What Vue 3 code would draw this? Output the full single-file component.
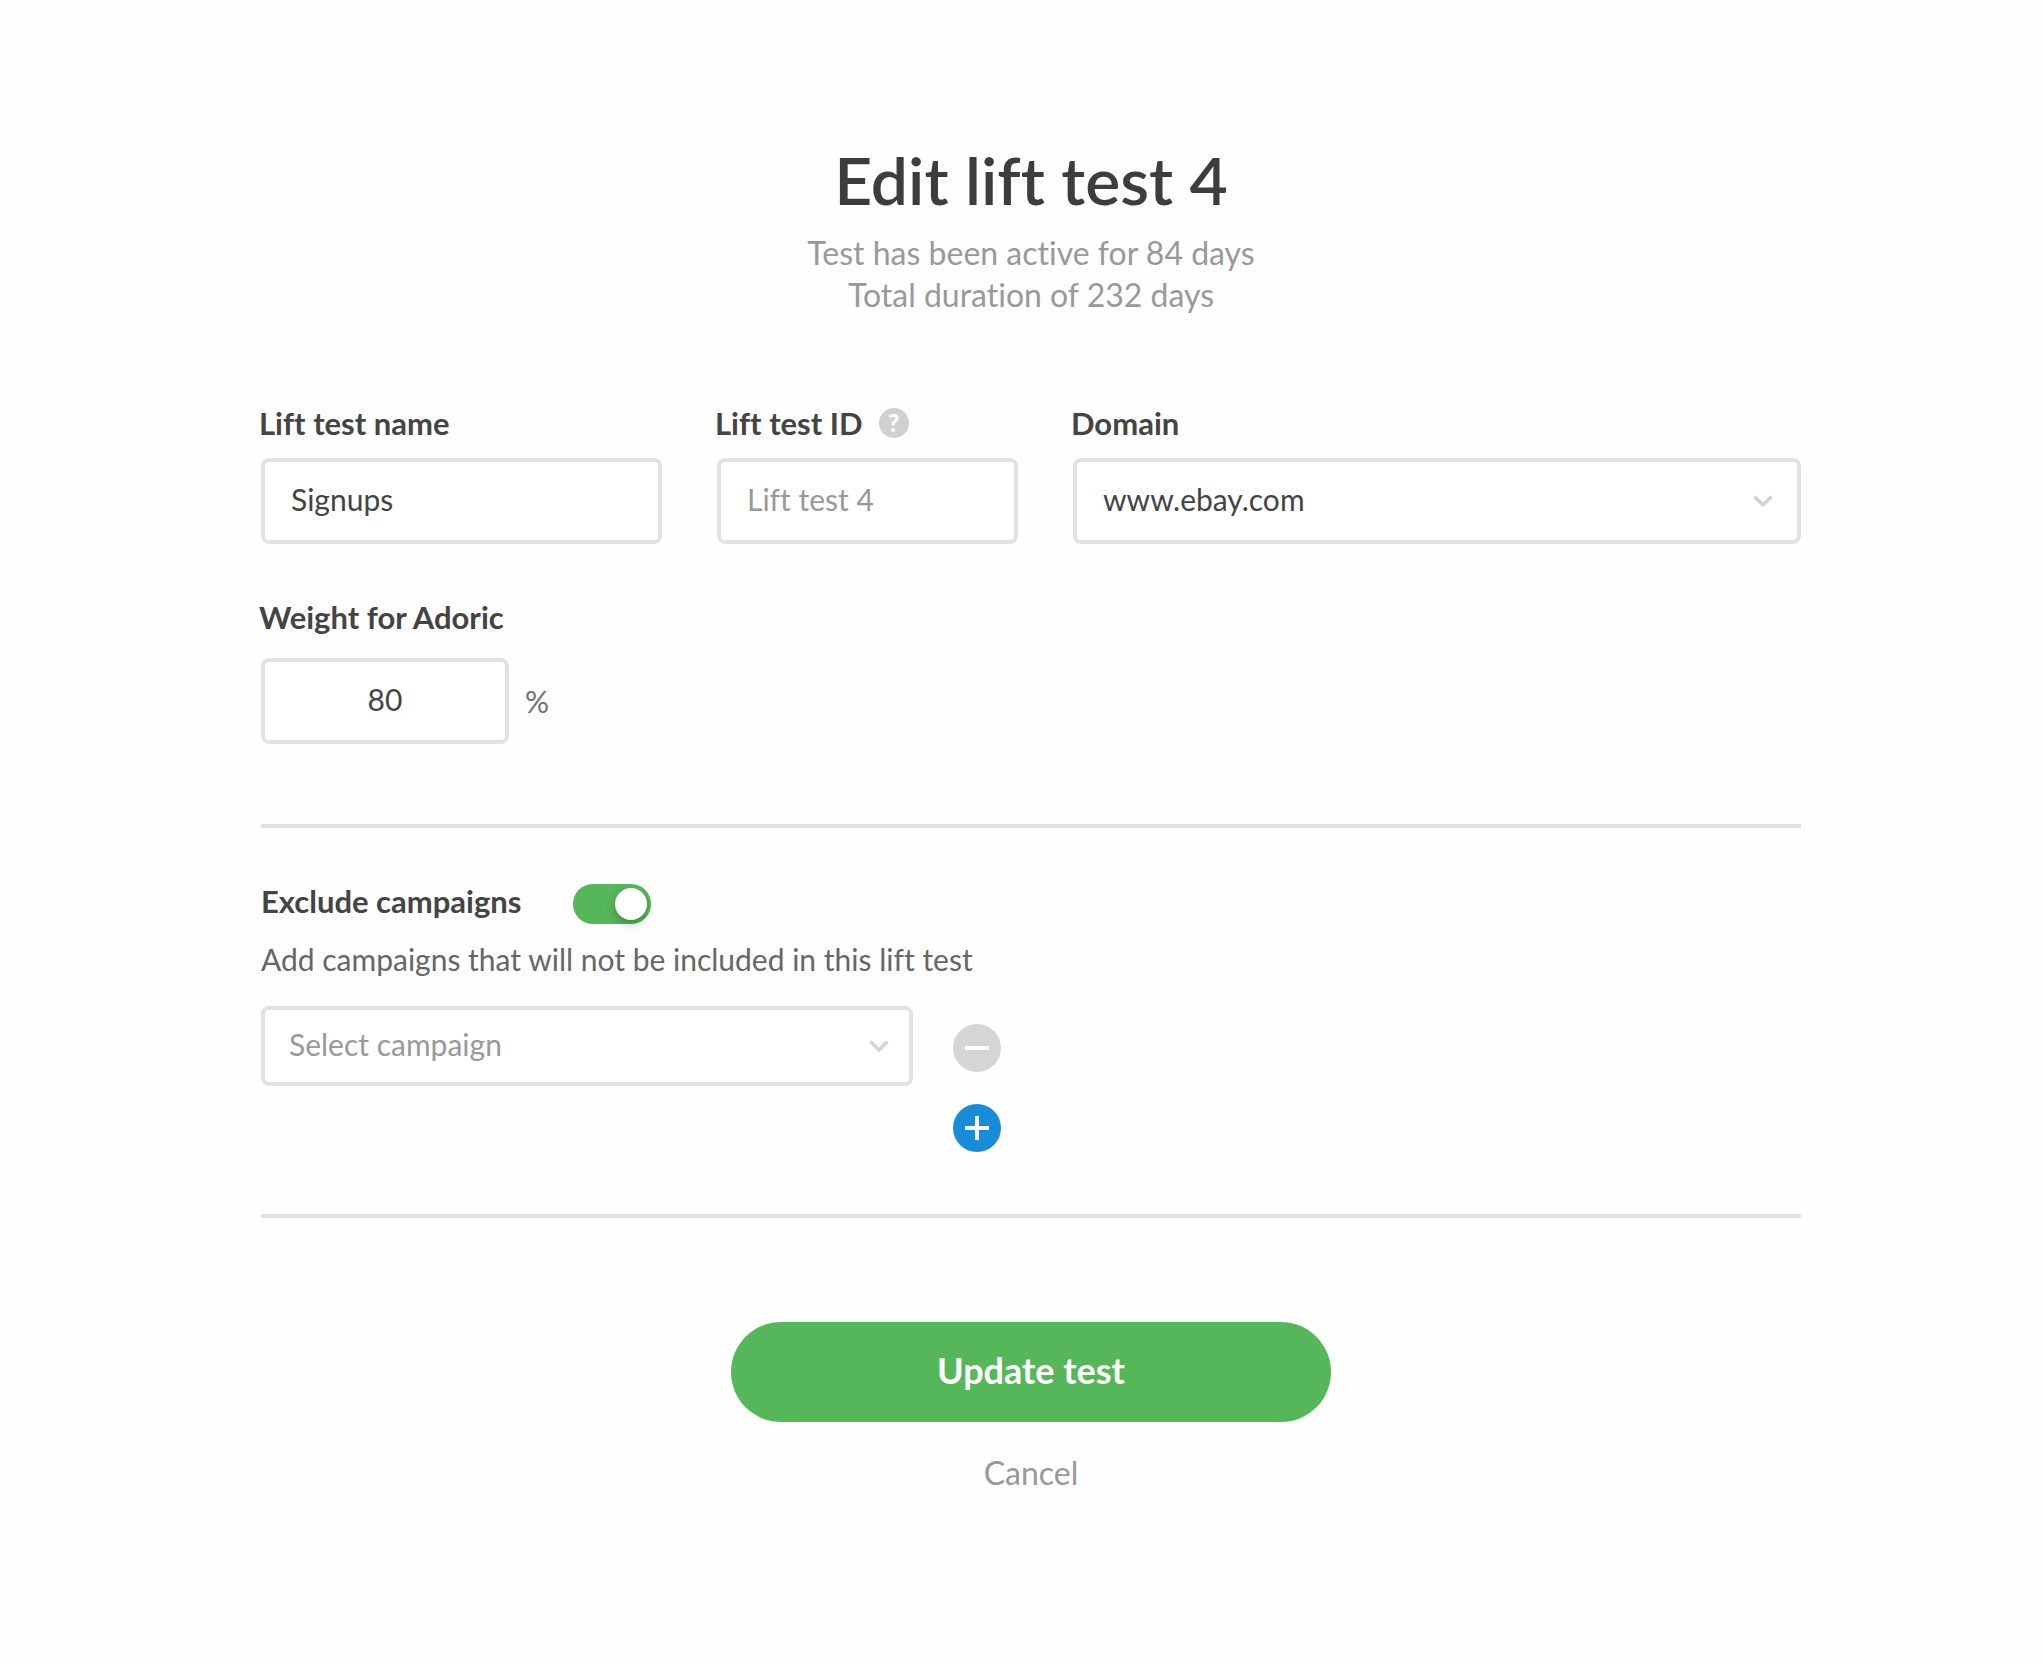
<script setup>
import { ref } from 'vue'

const testName = ref('Signups')
const testId = ref('')
const domain = ref('www.ebay.com')
const weight = ref('80')
const excludeCampaigns = ref(true)
const campaigns = ref([''])

const domains = ['www.ebay.com']

const addCampaign = () => {
  campaigns.value.push('')
}

const removeCampaign = (index) => {
  if (campaigns.value.length > 1) {
    campaigns.value.splice(index, 1)
  }
}
</script>

<template>
  <form class="lift-test" @submit.prevent>
    <header class="header">
      <h1>Edit lift test 4</h1>
      <p>Test has been active for 84 days</p>
      <p>Total duration of 232 days</p>
    </header>

    <div class="fields">
      <div class="field">
        <label class="label" for="test-name">Lift test name</label>
        <input id="test-name" v-model="testName" class="control" type="text">
      </div>

      <div class="field">
        <div class="label-row">
          <label class="label" for="test-id">Lift test ID</label>
          <span class="help">?</span>
        </div>
        <input id="test-id" v-model="testId" class="control" type="text" placeholder="Lift test 4">
      </div>

      <div class="field">
        <label class="label" for="domain">Domain</label>
        <div class="select">
          <select id="domain" v-model="domain" class="control">
            <option v-for="item in domains" :key="item" :value="item">{{ item }}</option>
          </select>
          <svg class="chevron" viewBox="0 0 20 12" aria-hidden="true">
            <path d="M1.5 1.5 10 10 18.5 1.5" />
          </svg>
        </div>
      </div>
    </div>

    <div class="field weight">
      <label class="label" for="weight">Weight for Adoric</label>
      <div class="weight-row">
        <input id="weight" v-model="weight" class="control" type="text">
        <span class="percent">%</span>
      </div>
    </div>

    <section class="exclude">
      <div class="exclude-title">
        <label class="label" for="exclude">Exclude campaigns</label>
        <input id="exclude" v-model="excludeCampaigns" class="toggle" type="checkbox">
      </div>
      <label class="hint" for="campaign-0">Add campaigns that will not be included in this lift test</label>

      <div class="campaigns">
        <div v-for="(campaign, index) in campaigns" :key="index" class="campaign">
          <div class="select">
            <select
              :id="`campaign-${index}`"
              v-model="campaigns[index]"
              class="control"
              :class="{ empty: !campaign }"
            >
              <option value="">Select campaign</option>
            </select>
            <svg class="chevron" viewBox="0 0 20 12" aria-hidden="true">
              <path d="M1.5 1.5 10 10 18.5 1.5" />
            </svg>
          </div>
          <button class="round remove" type="button" aria-label="Remove campaign" @click="removeCampaign(index)">
            <svg viewBox="0 0 48 48"><path d="M12 24H36" /></svg>
          </button>
        </div>
        <button class="round add" type="button" aria-label="Add campaign" @click="addCampaign">
          <svg viewBox="0 0 48 48"><path d="M12 24H36M24 12V36" /></svg>
        </button>
      </div>
    </section>

    <footer class="actions">
      <button class="submit" type="submit">Update test</button>
      <button class="cancel" type="button">Cancel</button>
    </footer>
  </form>
</template>

<style>
body {
  margin: 0;
  background: #fefefe;
}
</style>

<style scoped>
.lift-test {
  padding: 140px 241px 140px 261px;
  color: #444;
  font-family: Lato, sans-serif;
  font-size: 32px;
  font-variant-ligatures: none;
  line-height: 42px;
}

.header {
  margin-bottom: 86px;
  color: #999;
  text-align: center;
}

h1 {
  margin: 0 0 12px;
  color: #3d3d3d;
  font-size: 66px;
  font-weight: 600;
  line-height: 80px;
}

p {
  margin: 0;
}

.fields {
  display: grid;
  grid-template-columns: 401fr 301fr 728fr;
  gap: 55px;
}

.field {
  display: flex;
  flex-direction: column;
  gap: 14px;
}

.label {
  margin-left: -2px;
  font-size: 31px;
  font-weight: 700;
}

.label-row {
  display: flex;
  align-items: center;
  gap: 16px;
}

.help {
  width: 30px;
  height: 30px;
  border-radius: 50%;
  background: #d0d0d0;
  color: #fff;
  font-size: 24px;
  font-weight: 900;
  line-height: 30px;
  text-align: center;
}

.control {
  box-sizing: border-box;
  width: 100%;
  height: 86px;
  padding: 0 26px 4px;
  border: 4px solid #e2e2e2;
  border-radius: 8px;
  outline: none;
  background: #fff;
  color: #444;
  font-family: inherit;
  font-size: 30px;
  font-variant-ligatures: none;
  appearance: none;
}

.control::placeholder {
  color: #999;
  opacity: 1;
}

.campaign .control {
  height: 80px;
  padding: 0 24px 4px;
}

.control.empty {
  color: #999;
}

.select {
  display: flex;
  position: relative;
}

.chevron {
  position: absolute;
  top: 50%;
  right: 28px;
  width: 20px;
  height: 12px;
  margin-top: -6px;
  fill: none;
  stroke: #d3d3d3;
  stroke-width: 3.4;
  pointer-events: none;
}

.campaign .chevron {
  right: 24px;
}

.weight {
  gap: 20px;
  margin-top: 52px;
}

.weight-row {
  display: flex;
  align-items: center;
  gap: 16px;
}

.weight-row .control {
  width: 248px;
  text-align: center;
}

.percent {
  color: #707070;
  font-size: 30px;
}

.exclude {
  margin-top: 80px;
  padding: 52px 0 62px;
  border-top: 4px solid #e2e2e2;
  border-bottom: 4px solid #e2e2e2;
}

.exclude-title {
  display: flex;
  align-items: flex-start;
  gap: 52px;
}

.exclude-title .label {
  margin-left: 0;
}

.toggle {
  width: 78px;
  height: 40px;
  margin: 4px 0 0;
  padding: 4px;
  box-sizing: border-box;
  border-radius: 20px;
  background: #d0d0d0;
  appearance: none;
  cursor: pointer;
}

.toggle::before {
  content: '';
  display: block;
  width: 32px;
  height: 32px;
  border-radius: 50%;
  background: #fff;
  box-shadow: 0 4px 8px rgba(0, 0, 0, 0.25);
}

.toggle:checked {
  background: #56b65a;
}

.toggle:checked::before {
  margin-left: auto;
}

.hint {
  display: block;
  margin: 14px 0 26px;
  color: #666;
  font-size: 30px;
}

.campaigns {
  display: flex;
  flex-direction: column;
  align-items: flex-start;
  gap: 18px;
}

.campaign {
  display: flex;
  align-items: center;
  gap: 40px;
}

.campaign .select {
  width: 652px;
}

.round {
  width: 48px;
  height: 48px;
  padding: 0;
  border: none;
  border-radius: 50%;
  cursor: pointer;
}

.round svg {
  display: block;
  fill: none;
  stroke: #fff;
  stroke-width: 4;
}

.remove {
  margin-top: 4px;
  background: #d5d5d5;
}

.add {
  margin-left: 692px;
  background: #198cd9;
}

.actions {
  display: flex;
  flex-direction: column;
  align-items: center;
  gap: 30px;
  margin-top: 104px;
}

.submit {
  width: 600px;
  height: 100px;
  padding: 0 0 4px;
  border: none;
  border-radius: 50px;
  background: #56b65a;
  color: #fff;
  font-family: inherit;
  font-size: 36px;
  font-weight: 700;
  cursor: pointer;
}

.cancel {
  padding: 0;
  border: none;
  background: none;
  color: #999;
  font-family: inherit;
  font-size: 32px;
  line-height: 42px;
  cursor: pointer;
}
</style>
